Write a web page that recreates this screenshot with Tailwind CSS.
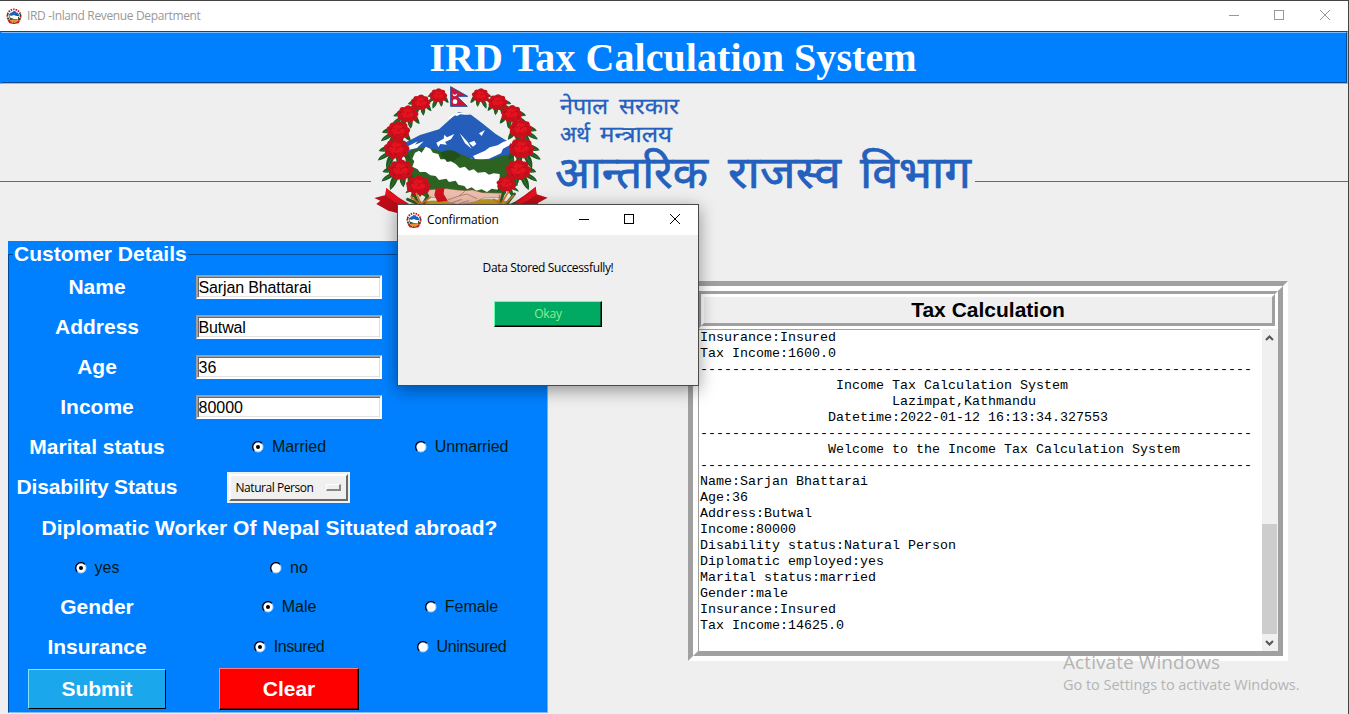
<!DOCTYPE html>
<html lang="en">
<head>
<meta charset="utf-8">
<title>IRD -Inland Revenue Department</title>
<script src="https://cdn.jsdelivr.net/npm/@tailwindcss/browser@4"></script>
</head>
<body class="bg-[#efefef]">
<svg class="hidden">
  <defs>
    <g id="flower">
      <g transform="scale(1.14)">
      <path fill="#c8101c" d="M-4-20Q4-24 10-17Q21-18 20-8Q30-3 23 5Q25 15 14 15Q8 24-1 18Q-12 24-15 14Q-27 12-23 2Q-30-6-20-10Q-18-20-8-17Z"/>
      <path fill="#e5121f" d="M-9-9Q-5-17 1-11Q10-14 11-5Q18 1 10 6Q7 14-1 9Q-10 13-12 4Q-19-3-9-9Z"/>
      <path fill="none" stroke="#a00c17" stroke-width="1.5" d="M-19-3Q-12-9-7-3M3-3Q9-9 15-5M-7 7Q0 13 8 6M-2-6Q4-3-1 2M13 10L19 6M-15 8L-9 12"/>
      </g>
    </g>
    <g id="leaves">
      <g transform="scale(1.2)">
      <path fill="#1b5a21" d="M-14-8Q-30-6-36 4Q-24 8-10 2ZM-18 6Q-36 14-38 24Q-24 22-8 10ZM-12 10Q-24 26-20 42Q-6 32-2 12ZM0 12Q-2 26 8 36Q16 24 10 8ZM10 6Q18 22 30 24Q28 8 18 0Z"/>
      <path fill="none" stroke="#4b8a3a" stroke-width="1.2" d="M-32 4L-16 0M-34 21L-16 9M-18 36L-8 16M7 32L4 14"/>
      </g>
    </g>
    <symbol id="seal" viewBox="0 0 16 16">
      <circle cx="8" cy="8" r="6.6" fill="#fff" stroke="#c8131f" stroke-width="1.8" stroke-dasharray="1.5 1"/>
      <path fill="none" stroke="#274d2a" stroke-width="1.4" d="M1.6 6V7.5M1.8 10L2.6 11.6M14.4 6V7.5M14.2 10L13.4 11.6"/>
      <path fill="#1d63bd" d="M3 7.5V6.5L5 4.5H6L7.5 3L10 3.5V4.5H11.5L13 6.5V8H10L8 7L5 8Z"/>
      <path fill="#27602b" d="M3 8L5 9L8 10.5L12 11V8.5L13 9V12H4Z"/>
      <path fill="#fff" d="M4 7.5L7 8.5L12 10V11.5L8 11L4 9.5Z"/>
      <path fill="#d99a28" d="M4 12L8 11.5L12 12L11 14.5H5Z"/>
      <path fill="#c8131f" d="M1.5 12L4 13L6 14.8H10L12 13L14.5 12L12.5 15.3L8 16L3.5 15.3Z"/>
    </symbol>
  </defs>
</svg>

<div class="relative flex h-[714px] w-[1349px] flex-col overflow-hidden border-t border-r border-[#444] bg-[#efefef] font-['Liberation_Sans',sans-serif]">

  <!-- title bar -->
  <header class="flex h-[30px] shrink-0 items-center bg-white pl-[6px] text-[#999]">
    <svg class="size-4"><use href="#seal"/></svg>
    <span class="ml-[5px] font-['Open_Sans',sans-serif] text-[12px] tracking-[-0.36px] whitespace-nowrap">IRD -Inland Revenue Department</span>
    <svg class="ml-auto h-[30px] w-[119px]" viewBox="0 0 119 30" fill="none" stroke="#999" shape-rendering="crispEdges">
      <path d="M0 14.5H10M45.5 9.5H54.5V18.5H45.5Z"/>
      <path shape-rendering="auto" d="M91 9L101 19M101 9L91 19"/>
    </svg>
  </header>

  <!-- page heading -->
  <div class="flex h-[53px] shrink-0 border border-t-[#004c99] border-r-[#80bfff] border-b-[#80bfff] border-l-[#0080ff]">
    <h1 class="flex flex-1 items-center justify-center border border-t-[#80bfff] border-r-[#004c99] border-b-[#004c99] border-l-[#0080ff] bg-[#0080ff] pt-px font-['Liberation_Serif',serif] text-[40px] leading-none font-bold text-white"><span class="-ml-[2px] tracking-[0.06px]">IRD Tax Calculation System</span></h1>
  </div>

  <!-- department logo with rule on both sides -->
  <div class="flex h-[157px] shrink-0">
    <div class="mt-[97px] h-px w-[371px] bg-[#0a80f0]"></div>
    <svg class="h-[134px] w-[604px]" viewBox="371 84 604 134">
      <g transform="translate(365 80) scale(.33333)">
        <path fill="#bd0d18" d="M28 354L62 345L64 324L100 352L132 372V408L70 392L34 372L46 362Z"/>
        <path fill="#e5121f" d="M64 324L78 338L104 356L134 376V386L90 366L60 346Z"/>
        <path fill="#bd0d18" d="M548 353L515 343L512 320L480 345L440 372V408L508 390L520 368Z"/>
        <path fill="#e5121f" d="M512 320L496 338L474 354L436 378V386L488 362L514 344Z"/>
        <path fill="#245dba" d="M120 188L165 165L222 148L262 112L280 96L318 104L350 128L392 162L438 190L446 240L340 240L250 222L120 222Z"/>
        <path fill="#fff" d="M246 115L262 106L278 98L300 99L316 104L300 104L286 103L276 108L270 106L256 115ZM214 188L236 176L238 164L246 172L268 162L258 178L240 186L246 194L226 192L220 202ZM126 200L158 184L150 194L176 184L156 204L128 210ZM284 160L308 186L320 206L300 190ZM312 188L328 182L334 192L324 200ZM342 160L360 150L350 168ZM324 228L360 212L374 202L398 196L414 186L440 178L434 196L414 206L408 220L372 236L332 240Z"/>
        <path fill="#2c6323" d="M120 224Q150 200 184 204Q214 206 238 220Q262 204 286 222L320 236L370 240L410 228L446 222L450 270L420 340L340 350L180 350L130 320Z"/>
        <path fill="#225019" d="M226 218Q262 200 288 228Q266 238 262 250Q230 240 226 218Z"/>
        <path fill="#c99b1a" d="M120 376Q190 354 284 366Q380 348 434 366V400H120Z"/>
        <path fill="#fff" d="M150 218L162 212L170 218L182 200L196 206L204 218L220 222L226 238L240 238L246 246L258 244L272 252L284 264L300 260L312 272L326 268L338 278L360 276L372 284L386 280L404 282V300L408 316L402 330L380 326L366 336L350 328L334 332L320 322L306 328L298 318L280 314L272 302L252 306L244 296L222 300L212 288L196 286L182 276L164 276L158 268L142 260L148 244L142 236Z"/>
        <path fill="#eebfae" stroke="#9c6553" stroke-width="1.5" d="M188 330L244 326L276 330L300 332L322 330L352 338L412 340V352L356 354L330 366L280 374L250 366L232 354L190 352Z"/>
        <path fill="none" stroke="#9c6553" stroke-width="2" d="M248 360L282 348L300 334M282 348L306 342L336 356M262 368L290 358M280 372L312 362"/>
        <path fill="#d3111e" d="M212 326L238 324L236 342L248 362L218 366L208 346Z"/>
        <g fill="none" stroke="#2b5b21" stroke-width="9" stroke-linecap="round"><path d="M146 340L168 390M128 358L172 376M188 348L166 388M414 342L402 386M448 342L410 390M450 370L418 384"/></g>
        <g>
          <use href="#leaves" transform="translate(222 46) scale(.8)"/><use href="#leaves" transform="translate(167 68) scale(.9)"/><use href="#leaves" transform="translate(128 103)"/><use href="#leaves" transform="translate(98 152) scale(1.1)"/><use href="#leaves" transform="translate(93 207) scale(1.2)"/><use href="#leaves" transform="translate(104 270) scale(1.2)"/><use href="#leaves" transform="translate(158 317) scale(.8)"/>
          <use href="#leaves" transform="translate(345 46) scale(-.8 .8)"/><use href="#leaves" transform="translate(400 67) scale(-.9 .9)"/><use href="#leaves" transform="translate(440 102) scale(-1 1)"/><use href="#leaves" transform="translate(468 147) scale(-1.1 1.1)"/><use href="#leaves" transform="translate(472 205) scale(-1.2 1.2)"/><use href="#leaves" transform="translate(462 270) scale(-1.2 1.2)"/><use href="#leaves" transform="translate(425 312) scale(-.8 .8)"/>
        </g>
        <g>
          <use href="#flower" transform="translate(220 47) scale(.9)"/><use href="#flower" transform="translate(167 68)"/><use href="#flower" transform="translate(128 103) scale(1.1)"/><use href="#flower" transform="translate(100 152) scale(1.2)"/><use href="#flower" transform="translate(95 207) scale(1.3)"/><use href="#flower" transform="translate(107 270) scale(1.3)"/><use href="#flower" transform="translate(160 317) scale(1.25)"/>
          <use href="#flower" transform="translate(347 47) scale(.9)"/><use href="#flower" transform="translate(398 67)"/><use href="#flower" transform="translate(440 102) scale(1.1)"/><use href="#flower" transform="translate(467 147) scale(1.2)"/><use href="#flower" transform="translate(470 205) scale(1.3)"/><use href="#flower" transform="translate(460 270) scale(1.3)"/><use href="#flower" transform="translate(424 312) scale(1)"/>
        </g>
        <g fill="none" stroke="#cf7526" stroke-width="5" stroke-linecap="round"><path d="M154 340L168 372L196 352M138 350L176 384L186 366M430 336L408 372L386 358M446 346L408 384M404 346L402 376"/></g>
        <path fill="#c9163a" stroke="#27509f" stroke-width="3" d="M257 20L308 49H276L307 79H257Z"/>
        <path fill="#fff" d="M263 40Q269 49 277 40Q276 49 269 49Q263 49 263 40Z"/><circle cx="270" cy="65" r="7" fill="#fff"/>
      </g>
      <g fill="#2460bd" stroke="#2460bd" stroke-width=".3" font-family="'Noto Sans Devanagari','Noto Sans','Lohit Devanagari',sans-serif" lang="ne">
        <g font-size="22">
          <text x="560" y="114" textLength="48" lengthAdjust="spacingAndGlyphs">नेपाल</text>
          <text x="619" y="114" textLength="60" lengthAdjust="spacingAndGlyphs">सरकार</text>
          <text x="560" y="142" textLength="30" lengthAdjust="spacingAndGlyphs">अर्थ</text>
          <text x="600" y="142" textLength="72" lengthAdjust="spacingAndGlyphs">मन्त्रालय</text>
        </g>
        <g font-size="45" stroke-width=".7">
          <text x="555" y="188" textLength="153" lengthAdjust="spacingAndGlyphs">आन्तरिक</text>
          <text x="728" y="188" textLength="113" lengthAdjust="spacingAndGlyphs">राजस्व</text>
          <text x="860" y="188" textLength="111" lengthAdjust="spacingAndGlyphs">विभाग</text>
        </g>
      </g>
    </svg>
    <div class="mt-[97px] h-px flex-1 bg-[#0a80f0]"></div>
  </div>

  <main class="flex flex-1 items-start">
    <!-- customer form -->
    <div class="ml-2 h-[472px] w-[540px] bg-[#0080ff] text-[21px] font-bold text-white">
      <fieldset class="h-[472px] border border-t-[#004c99] border-r-[#66b3ff] border-b-[#80bfff] border-l-[#004c99]">
        <legend class="ml-1 h-[26px] px-px leading-[26px] whitespace-nowrap">Customer Details</legend>
        <div class="-ml-px grid grid-cols-[178px_206px_139px] auto-rows-[40px] items-center justify-items-center leading-none whitespace-nowrap">
          <span class="pb-[2px]">Name</span>
          <div class="mr-px flex h-6 w-[186px] items-center border-2 border-t-[#a0a0a0] border-r-white border-b-white border-l-[#a0a0a0] bg-white pt-[2px] pl-px text-[16px] font-normal tracking-[-0.13px] text-black shadow-[inset_1px_1px_0_#696969,inset_-1px_-1px_0_#e3e3e3]">Sarjan Bhattarai</div><i></i>
          <span class="pb-[2px]">Address</span>
          <div class="mr-px flex h-6 w-[186px] items-center border-2 border-t-[#a0a0a0] border-r-white border-b-white border-l-[#a0a0a0] bg-white pt-[2px] pl-px text-[16px] font-normal tracking-[-0.13px] text-black shadow-[inset_1px_1px_0_#696969,inset_-1px_-1px_0_#e3e3e3]">Butwal</div><i></i>
          <span class="pb-[2px]">Age</span>
          <div class="mr-px flex h-6 w-[186px] items-center border-2 border-t-[#a0a0a0] border-r-white border-b-white border-l-[#a0a0a0] bg-white pt-[2px] pl-px text-[16px] font-normal text-black shadow-[inset_1px_1px_0_#696969,inset_-1px_-1px_0_#e3e3e3]">36</div><i></i>
          <span class="pb-[2px]">Income</span>
          <div class="mr-px flex h-6 w-[186px] items-center border-2 border-t-[#a0a0a0] border-r-white border-b-white border-l-[#a0a0a0] bg-white pt-[2px] pl-px text-[16px] font-normal text-black shadow-[inset_1px_1px_0_#696969,inset_-1px_-1px_0_#e3e3e3]">80000</div><i></i>
          <span class="pb-[2px]">Marital status</span>
          <label class="flex items-center gap-2 text-[16px] font-normal text-[#001a10]"><svg class="mb-px size-3" viewBox="0 0 12 12"><circle cx="6" cy="6" r="5" fill="#fff" stroke="#9fd0ff"/><path d="M2.2 9.8A5.3 5.3 0 0 1 9.8 2.2" fill="none" stroke="#000" stroke-width="1.3"/><circle cx="6" cy="6" r="2" fill="#000"/></svg>Married</label>
          <label class="flex items-center gap-2 text-[16px] font-normal tracking-[-0.15px] text-[#001a10]"><svg class="mb-px size-3" viewBox="0 0 12 12"><circle cx="6" cy="6" r="5" fill="#fff" stroke="#9fd0ff"/><path d="M2.2 9.8A5.3 5.3 0 0 1 9.8 2.2" fill="none" stroke="#000" stroke-width="1.3"/></svg>Unmarried</label>
          <span class="pb-[2px] tracking-[-0.15px]">Disability Status</span>
          <div class="mr-[2px] flex h-[31px] w-[123px] border-2 border-[#f0f0f0] bg-[#f0f0f0]">
            <div class="flex flex-1 items-center justify-between border-2 border-t-white border-r-[#696969] border-b-[#696969] border-l-white pt-px pr-[5px] pl-[5px] font-['Open_Sans',sans-serif] text-[12px] font-normal tracking-[-0.45px] text-black">Natural Person
              <i class="h-[7px] w-[15px] border-t border-r-2 border-b-2 border-l border-t-white border-r-[#888] border-b-[#888] border-l-white"></i>
            </div>
          </div><i></i>
          <span class="col-span-3 tracking-[0.03px]">Diplomatic Worker Of Nepal Situated abroad?</span>
          <label class="flex items-center gap-2 pt-px text-[16px] font-normal text-[#001a10]"><svg class="size-3" viewBox="0 0 12 12"><circle cx="6" cy="6" r="5" fill="#fff" stroke="#9fd0ff"/><path d="M2.2 9.8A5.3 5.3 0 0 1 9.8 2.2" fill="none" stroke="#000" stroke-width="1.3"/><circle cx="6" cy="6" r="2" fill="#000"/></svg>yes</label>
          <label class="flex items-center gap-2 pt-px text-[16px] font-normal text-[#001a10]"><svg class="size-3" viewBox="0 0 12 12"><circle cx="6" cy="6" r="5" fill="#fff" stroke="#9fd0ff"/><path d="M2.2 9.8A5.3 5.3 0 0 1 9.8 2.2" fill="none" stroke="#000" stroke-width="1.3"/></svg>no</label><i></i>
          <span class="pb-[2px]">Gender</span>
          <label class="flex items-center gap-2 text-[16px] font-normal text-[#001a10]"><svg class="mb-px size-3" viewBox="0 0 12 12"><circle cx="6" cy="6" r="5" fill="#fff" stroke="#9fd0ff"/><path d="M2.2 9.8A5.3 5.3 0 0 1 9.8 2.2" fill="none" stroke="#000" stroke-width="1.3"/><circle cx="6" cy="6" r="2" fill="#000"/></svg>Male</label>
          <label class="flex items-center gap-2 text-[16px] font-normal text-[#001a10]"><svg class="mb-px size-3" viewBox="0 0 12 12"><circle cx="6" cy="6" r="5" fill="#fff" stroke="#9fd0ff"/><path d="M2.2 9.8A5.3 5.3 0 0 1 9.8 2.2" fill="none" stroke="#000" stroke-width="1.3"/></svg>Female</label>
          <span class="pb-[2px]">Insurance</span>
          <label class="flex items-center gap-2 text-[16px] font-normal tracking-[-0.4px] text-[#001a10]"><svg class="mb-px size-3" viewBox="0 0 12 12"><circle cx="6" cy="6" r="5" fill="#fff" stroke="#9fd0ff"/><path d="M2.2 9.8A5.3 5.3 0 0 1 9.8 2.2" fill="none" stroke="#000" stroke-width="1.3"/><circle cx="6" cy="6" r="2" fill="#000"/></svg>Insured</label>
          <label class="flex items-center gap-2 text-[16px] font-normal tracking-[-0.35px] text-[#001a10]"><svg class="mb-px size-3" viewBox="0 0 12 12"><circle cx="6" cy="6" r="5" fill="#fff" stroke="#9fd0ff"/><path d="M2.2 9.8A5.3 5.3 0 0 1 9.8 2.2" fill="none" stroke="#000" stroke-width="1.3"/></svg>Uninsured</label>
          <button class="mt-[3px] h-10 w-[138px] border border-t-[#80e8ff] border-r-black border-b-black border-l-[#80e8ff] bg-[#1ba7ec]">Submit</button>
          <button class="mt-[3px] h-[42px] w-[140px] border border-t-[#ff8080] border-r-black border-b-black border-l-[#ff8080] bg-[#ff0000] shadow-[inset_-1px_-1px_0_#7f0000]">Clear</button>
        </div>
      </fieldset>
    </div>

    <!-- bill area -->
    <section class="mt-10 ml-[140px] h-[380px] w-[600px] border-[5px] border-t-[#a0a0a0] border-r-white border-b-white border-l-[#a0a0a0]">
      <div class="flex h-[370px] flex-col border-[5px] border-t-white border-r-[#a0a0a0] border-b-[#a0a0a0] border-l-white bg-white">
        <div class="h-[38px] shrink-0 border-[3px] border-t-[#a0a0a0] border-r-white border-b-white border-l-[#a0a0a0]">
          <h2 class="flex h-8 items-center justify-center border-[3px] border-t-white border-r-[#a0a0a0] border-b-[#a0a0a0] border-l-white bg-[#efefef] pb-[2px] text-[21px] leading-none font-bold text-black">Tax Calculation</h2>
        </div>
        <div class="flex min-h-0 flex-1">
          <pre class="w-[562px] border-t border-l border-[#a0a0a0] pl-px font-['Liberation_Mono',monospace] text-[13.333px] leading-4 text-black">Insurance:Insured
Tax Income:1600.0
---------------------------------------------------------------------
                 Income Tax Calculation System
                        Lazimpat,Kathmandu
                Datetime:2022-01-12 16:13:34.327553
---------------------------------------------------------------------
                Welcome to the Income Tax Calculation System
---------------------------------------------------------------------
Name:Sarjan Bhattarai
Age:36
Address:Butwal
Income:80000
Disability status:Natural Person
Diplomatic employed:yes
Marital status:married
Gender:male
Insurance:Insured
Tax Income:14625.0</pre>
          <div class="ml-[2px] flex w-4 flex-col items-start bg-[#f0f0f0]">
            <svg class="h-[17px] w-[15px]" viewBox="0 0 15 17" fill="none" stroke="#555" stroke-width="2"><path d="M4 11L7.5 7.5L11 11"/></svg>
            <div class="mt-[178px] h-[110px] w-[15px] bg-[#cdcdcd]"></div>
            <svg class="h-[17px] w-[15px]" viewBox="0 0 15 17" fill="none" stroke="#555" stroke-width="2"><path d="M4 7L7.5 10.5L11 7"/></svg>
          </div>
        </div>
      </div>
    </section>
  </main>

  <!-- activation watermark -->
  <div class="absolute top-[649px] left-[1063px] font-['Open_Sans',sans-serif] whitespace-nowrap text-[#b4b4b4]">
    <p class="text-[19px] leading-6 tracking-[0.08px]">Activate Windows</p>
    <p class="pt-px text-[14.5px] leading-5 tracking-[-0.03px]">Go to Settings to activate Windows.</p>
  </div>

  <!-- confirmation dialog -->
  <div class="absolute top-[203px] left-[397px] flex h-[182px] w-[302px] flex-col border border-[#4a4a4a] bg-[#efefef] font-['Open_Sans',sans-serif] text-[12px] text-black shadow-[0_4px_16px_rgba(0,0,0,0.4)]">
    <div class="flex h-[30px] items-center bg-white pl-2">
      <svg class="size-4"><use href="#seal"/></svg>
      <span class="ml-[5px] tracking-[-0.18px]">Confirmation</span>
      <svg class="ml-auto h-[30px] w-[120px]" viewBox="0 0 120 30" fill="none" stroke="#000" shape-rendering="crispEdges">
        <path d="M1 14.5H11M46.5 9.5H55.5V18.5H46.5Z"/>
        <path shape-rendering="auto" d="M92 9L102 19M102 9L92 19"/>
      </svg>
    </div>
    <p class="mt-[24px] text-center leading-[18px] tracking-[-0.36px]">Data Stored Successfully!</p>
    <button class="mx-auto mt-[24px] h-[26px] w-[108px] border border-t-[#66ffb0] border-r-black border-b-black border-l-[#66ffb0] bg-[#00aa63] leading-none tracking-[-0.2px] text-[#90ee90] shadow-[inset_-1px_-1px_0_#005531]">Okay</button>
  </div>
</div>
</body>
</html>
